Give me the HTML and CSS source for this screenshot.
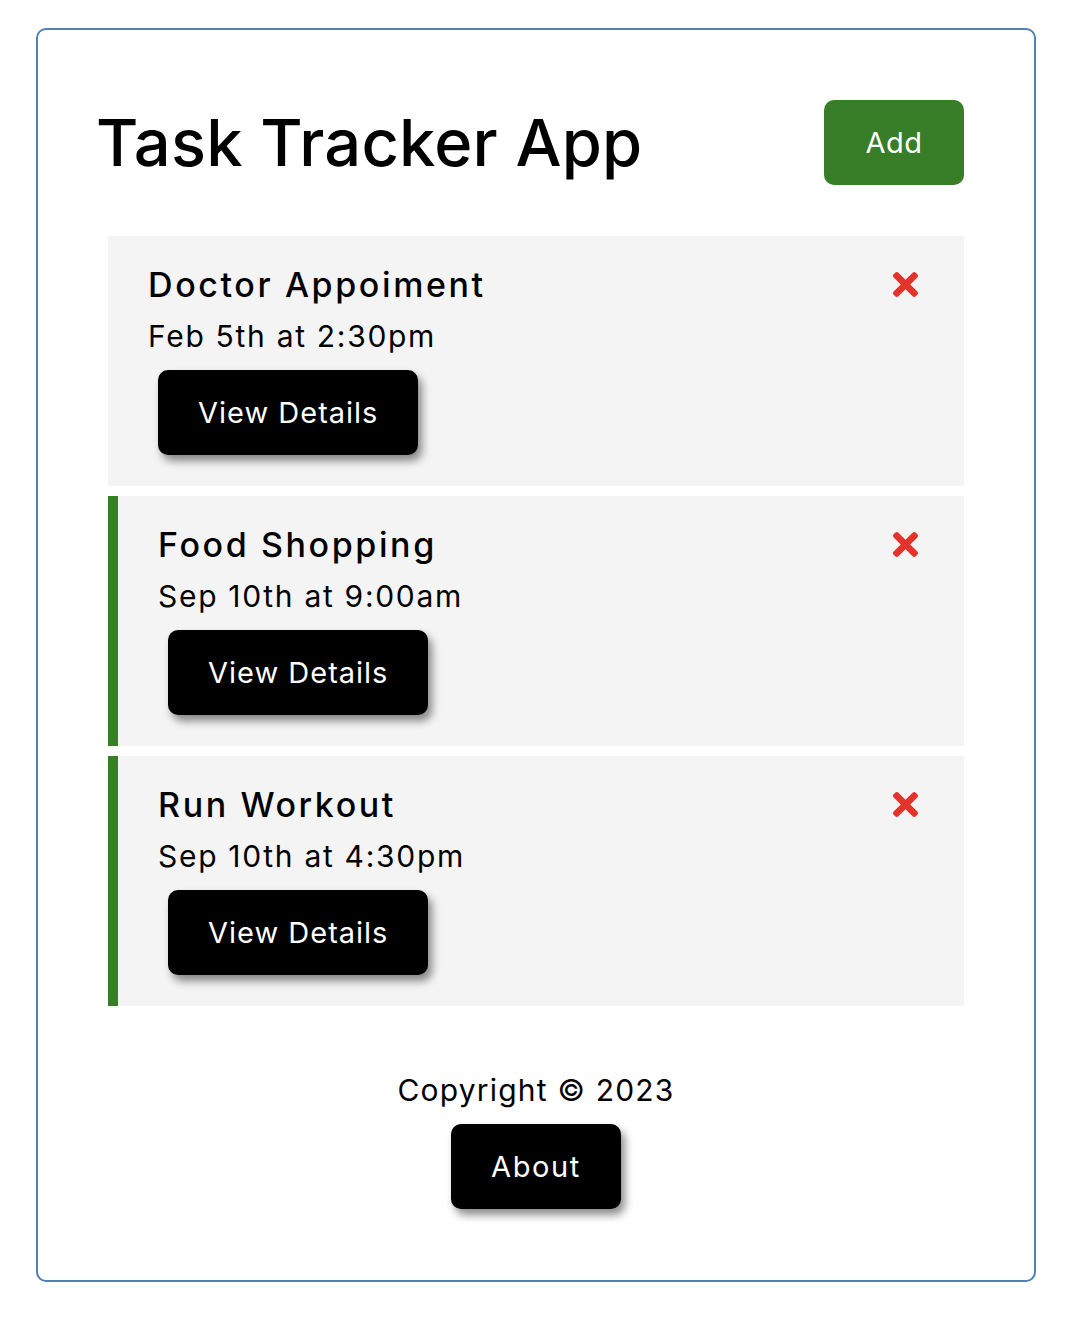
FILE: index.html
```html
<!DOCTYPE html>
<html lang="en">
<head>
<meta charset="utf-8">
<title>Task Tracker App</title>
<link rel="stylesheet" href="styles.css">
</head>
<body>
<div class="container">
  <header class="header">
    <h1 class="title">Task Tracker App</h1>
    <button class="btn btn-green">Add</button>
  </header>
  <div class="tasks">
    <div class="task">
      <h3 class="task-title"><span>Doctor Appoiment</span>
        <svg class="icon-x" viewBox="0 80 352 352" aria-hidden="true"><path d="M242.72 256l100.07-100.07c12.28-12.28 12.28-32.19 0-44.48l-22.24-22.24c-12.28-12.28-32.19-12.28-44.48 0L176 189.28 75.93 89.21c-12.28-12.28-32.19-12.28-44.48 0L9.21 111.45c-12.28 12.28-12.28 32.19 0 44.48L109.28 256 9.21 356.07c-12.28 12.28-12.28 32.19 0 44.48l22.24 22.24c12.28 12.28 32.2 12.28 44.48 0L176 322.72l100.07 100.07c12.28 12.28 32.2 12.28 44.48 0l22.24-22.24c12.28-12.28 12.28-32.19 0-44.48L242.72 256z"/></svg>
      </h3>
      <p class="task-date">Feb 5th at 2:30pm</p>
      <div class="task-actions"><button class="btn">View Details</button></div>
    </div>
    <div class="task reminder">
      <h3 class="task-title"><span>Food Shopping</span>
        <svg class="icon-x" viewBox="0 80 352 352" aria-hidden="true"><path d="M242.72 256l100.07-100.07c12.28-12.28 12.28-32.19 0-44.48l-22.24-22.24c-12.28-12.28-32.19-12.28-44.48 0L176 189.28 75.93 89.21c-12.28-12.28-32.19-12.28-44.48 0L9.21 111.45c-12.28 12.28-12.28 32.19 0 44.48L109.28 256 9.21 356.07c-12.28 12.28-12.28 32.19 0 44.48l22.24 22.24c12.28 12.28 32.2 12.28 44.48 0L176 322.72l100.07 100.07c12.28 12.28 32.2 12.28 44.48 0l22.24-22.24c12.28-12.28 12.28-32.19 0-44.48L242.72 256z"/></svg>
      </h3>
      <p class="task-date">Sep 10th at 9:00am</p>
      <div class="task-actions"><button class="btn">View Details</button></div>
    </div>
    <div class="task reminder">
      <h3 class="task-title"><span>Run Workout</span>
        <svg class="icon-x" viewBox="0 80 352 352" aria-hidden="true"><path d="M242.72 256l100.07-100.07c12.28-12.28 12.28-32.19 0-44.48l-22.24-22.24c-12.28-12.28-32.19-12.28-44.48 0L176 189.28 75.93 89.21c-12.28-12.28-32.19-12.28-44.48 0L9.21 111.45c-12.28 12.28-12.28 32.19 0 44.48L109.28 256 9.21 356.07c-12.28 12.28-12.28 32.19 0 44.48l22.24 22.24c12.28 12.28 32.2 12.28 44.48 0L176 322.72l100.07 100.07c12.28 12.28 32.2 12.28 44.48 0l22.24-22.24c12.28-12.28 12.28-32.19 0-44.48L242.72 256z"/></svg>
      </h3>
      <p class="task-date">Sep 10th at 4:30pm</p>
      <div class="task-actions"><button class="btn">View Details</button></div>
    </div>
  </div>
  <footer class="footer">
    <p class="copyright">Copyright &copy; 2023</p>
    <button class="btn btn-about">About</button>
  </footer>
</div>
</body>
</html>
```

FILE: styles.css
```css
* { box-sizing: border-box; }

html, body {
  margin: 0;
  padding: 0;
  background: #ffffff;
}

body {
  font-family: "Inter", "Liberation Sans", sans-serif;
  color: #000;
  padding: 28px 36px 0 36px;
}

.container {
  width: 1000px;
  height: 1254px;
  border: 2px solid #5081b5;
  border-radius: 10px;
  padding: 60px 60px;
  display: flex;
  flex-direction: column;
}

.header {
  height: 105px;
  display: flex;
  align-items: center;
  justify-content: space-between;
}

.title {
  margin: 0 0 0 -2px;
  font-size: 65px;
  font-weight: 500;
  letter-spacing: 0.2px;
  line-height: 80px;
}

.btn {
  display: inline-block;
  background: #000;
  color: #fff;
  border: none;
  border-radius: 10px;
  margin: 10px;
  padding: 20px 40px;
  font-family: inherit;
  font-size: 29px;
  font-weight: 400;
  letter-spacing: 1px;
  line-height: 45px;
  height: 85px;
  box-shadow: 4px 6px 8px rgba(0, 0, 0, 0.45);
  cursor: pointer;
}

.btn-green {
  background: #387d27;
  box-shadow: none;
  width: 140px;
  padding: 20px 0;
  letter-spacing: 0.5px;
}

.btn-about {
  letter-spacing: 1.6px;
}

.tasks {
  margin-top: 41px;
  display: flex;
  flex-direction: column;
  gap: 10px;
}

.task {
  margin: 0 10px;
  height: 250px;
  background: #f4f4f4;
  padding: 20px 40px;
}

.task.reminder {
  border-left: 10px solid #387d27;
}

.task-title {
  margin: 0;
  height: 57px;
  display: flex;
  align-items: center;
  justify-content: space-between;
  font-size: 34px;
  font-weight: 500;
  letter-spacing: 2.6px;
  line-height: 57px;
}

.icon-x {
  width: 25px;
  height: 25px;
  fill: #e4332a;
  margin-right: 6px;
  flex: none;
}

.task-date {
  margin: 0;
  font-size: 30px;
  letter-spacing: 1.7px;
  line-height: 47px;
  height: 47px;
}

.task-actions {
  display: flex;
}

.footer {
  margin-top: 61px;
  display: flex;
  flex-direction: column;
  align-items: center;
}

.copyright {
  margin: 0;
  font-size: 30px;
  letter-spacing: 1.2px;
  line-height: 47px;
}
```
